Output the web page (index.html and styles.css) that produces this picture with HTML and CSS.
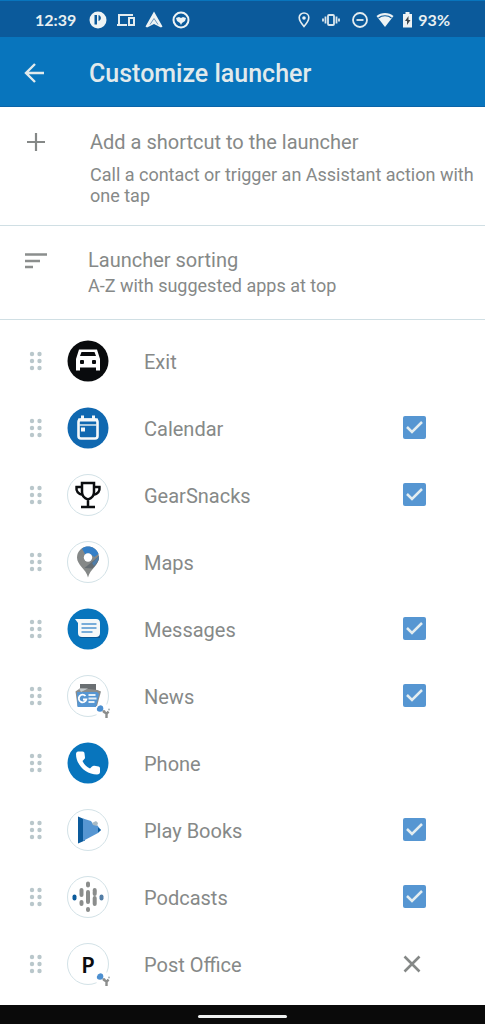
FILE: index.html
```html
<!DOCTYPE html>
<html lang="en">
<head>
<meta charset="utf-8">
<meta name="viewport" content="width=device-width, initial-scale=1">
<title>Customize launcher</title>
<link rel="stylesheet" href="styles.css">
</head>
<body>
<svg class="defs" width="0" height="0" aria-hidden="true">
  <symbol id="grip" viewBox="0 0 14 20">
    <g fill="#b9c7cb"><circle cx="3" cy="3" r="2.200"/><circle cx="10.500" cy="3" r="2.200"/><circle cx="3" cy="10" r="2.200"/><circle cx="10.500" cy="10" r="2.200"/><circle cx="3" cy="17" r="2.200"/><circle cx="10.500" cy="17" r="2.200"/></g>
  </symbol>
  <symbol id="assistant" viewBox="0 0 16 16">
    <circle cx="4" cy="4.500" r="3.300" fill="#4c8fd0"/><circle cx="8" cy="7.500" r="1.500" fill="#8b8d8c"/><circle cx="13" cy="5.500" r="1" fill="#aab4b7"/><path d="M8 8l2.500 1.500M12.500 7.500L10.500 10v4" fill="none" stroke="#8b8d8c" stroke-width="2.400"/>
  </symbol>
</svg>
<div class="screen">
  <div class="status">
    <span class="status-text">12:39</span>
    <div class="status-left">
      <svg width="18" height="18" viewBox="0 0 18 18"><circle cx="9" cy="9" r="8.500" fill="#eef3f4"/><path d="M5.500 4H8v9.500H5.500z" fill="#0b5a9b"/><path d="M10 4.500a3 3 0 0 1 0 5z" fill="#0b5a9b" stroke="#0b5a9b"/></svg>
      <svg width="20" height="18" viewBox="0 0 20 18" fill="none" stroke="#e4ecef" stroke-width="2"><path d="M3 13V4h14M1 14h10"/><rect x="13" y="7" width="5" height="7"/></svg>
      <svg width="18" height="18" viewBox="0 0 18 18" fill="#eef3f4"><path d="M9 0.500L17.500 15.500l-1.500 1L9 13l-7 3.500-1.500-1z"/><path d="M5 13.500L9 7.500l4 6" fill="none" stroke="#6c98bd"/></svg>
      <svg width="18" height="18" viewBox="0 0 18 18"><circle cx="9" cy="9" r="7.500" fill="none" stroke="#eef3f4" stroke-width="2"/><path d="M4 7l3-1 2 1 2-1 3 1-1 3-3 2-1 2-1-2-3-2z" fill="#eef3f4"/></svg>
    </div>
    <div class="status-right">
      <svg width="12" height="18" viewBox="0 0 12 18"><path d="M6 2C3.200 2 1.200 4 1.200 6.500 1.200 10 6 15.500 6 15.500s4.800-5.500 4.800-9C10.800 4 8.800 2 6 2z" fill="none" stroke="#e4ecef" stroke-width="1.600"/><circle cx="6" cy="7" r="1.800" fill="#eef3f4"/></svg>
      <svg width="18" height="18" viewBox="0 0 18 18" fill="none" stroke="#dbe7ee" stroke-width="1.800"><rect x="6" y="4" width="6" height="10" rx="1"/><path d="M3.500 5.500v7M1 7.500v3M14.500 5.500v7M17 7.500v3"/></svg>
      <svg width="16" height="18" viewBox="0 0 16 18" fill="none" stroke="#e4ecef" stroke-width="1.800"><circle cx="8" cy="9" r="7"/><path d="M4.500 9h7"/></svg>
      <svg class="tight" width="18" height="18" viewBox="0 0 18 18"><path d="M0.500 5C5 1 13 1 17.500 5L9 16z" fill="#eef3f4"/><path d="M2.500 7C6 4 12 4 15.500 7" fill="none" stroke="#0b5a9b" stroke-width="1.200"/></svg>
      <svg class="tight" width="11" height="18" viewBox="0 0 11 18"><path d="M3.500 1h4v2H10v13.500H1V3h2.500z" fill="#eef3f4"/><path d="M6.500 5L3 10h2v4l3.500-5h-2z" fill="#41494d"/></svg>
    </div>
    <span class="status-text">93%</span>
  </div>
  <header class="appbar">
    <button class="plain back" type="button" aria-label="Back"><svg width="22" height="22" viewBox="0 0 22 22" fill="none" stroke="#e1eaec" stroke-width="2.400"><path d="M20 10H3M11 1l-9 9 9 9"/></svg></button>
    <h1>Customize launcher</h1>
  </header>
  <main>
    <button class="plain option option-add" type="button">
      <svg width="22" height="22" viewBox="0 0 22 22"><path d="M2 12h18M11 3v18" stroke="#858887" stroke-width="2.200"/></svg>
      <span class="option-body"><span class="option-title">Add a shortcut to the launcher</span><span class="option-note">Call a contact or trigger an Assistant action with one tap</span></span>
    </button>
    <button class="plain option option-sort" type="button">
      <svg width="24" height="22" viewBox="0 0 24 22"><path d="M1 6.500h22M1 13h15M1 19h8" stroke="#8b8e8d" stroke-width="2.600"/></svg>
      <span class="option-body"><span class="option-title">Launcher sorting</span><span class="option-note">A-Z with suggested apps at top</span></span>
    </button>
    <ul class="apps">
      <li class="app">
        <svg class="grip"><use href="#grip"/></svg>
        <svg class="icon" viewBox="0 0 44 44"><circle cx="22" cy="22" r="20.500" fill="#090b0d"/><path d="M13 10.500h18l3 9.500V31.500h-4v-3H14v3h-4V20z" fill="#fff"/><path d="M15.500 13h13l1.500 4H14z" fill="#090b0d"/><rect x="14" y="21" width="4" height="4" rx="1" fill="#090b0d"/><rect x="26" y="21" width="4" height="4" rx="1" fill="#090b0d"/></svg>
        <span class="name">Exit</span>
      </li>
      <li class="app">
        <svg class="grip"><use href="#grip"/></svg>
        <svg class="icon" viewBox="0 0 44 44"><circle cx="22" cy="22" r="20.500" fill="#1068b0"/><rect x="12.500" y="13.500" width="19" height="19" rx="2.500" fill="none" stroke="#f5f8f9" stroke-width="2.600"/><path d="M12 12.500h20v3H12zM15 9.500h3v5h-3zM26 9.500h3v5h-3z" fill="#f5f8f9"/><path d="M13 19h18" stroke="#dbe8ee" stroke-width="1.500"/><path d="M15 21.500h4v4h-4z" fill="#f5f8f9"/></svg>
        <label class="name" for="calendar">Calendar</label><input class="check" type="checkbox" id="calendar" checked>
      </li>
      <li class="app">
        <svg class="grip"><use href="#grip"/></svg>
        <svg class="icon" viewBox="0 0 44 44"><circle class="ring" cx="22" cy="22" r="20.500"/><path d="M16 10h12v9c0 4-3 6.500-6 7.500-3-1-6-3.500-6-7.500zM16 14h-5.500c-.5 4 1.500 7 6.500 8M28 14h5.500c.5 4-1.500 7-6.500 8M22 26v7.500M15 34h14" fill="none" stroke="#0b0d0f" stroke-width="2.500"/></svg>
        <label class="name" for="gear">GearSnacks</label><input class="check" type="checkbox" id="gear" checked>
      </li>
      <li class="app">
        <svg class="grip"><use href="#grip"/></svg>
        <svg class="icon" viewBox="0 0 44 44"><circle class="ring" cx="22" cy="22" r="20.500"/><path d="M22 6.500A11 11 0 0 0 11 17.500C11 25 20 29 22 37.500 24 29 33 25 33 17.500A11 11 0 0 0 22 6.500z" fill="#858887"/><path d="M16 8.500c5-4 14-2 16.500 5.500l-4 3-6-4-3 2z" fill="#347fc7"/><path d="M18.500 28L33 16c.3 6-4 9.500-6.500 12.500z" fill="#656d72"/><path d="M26 23l7-7c.3 4-2.500 7.500-5 10z" fill="#4f7da8"/><circle cx="22" cy="17.500" r="4.200" fill="#fff"/></svg>
        <span class="name">Maps</span>
      </li>
      <li class="app">
        <svg class="grip"><use href="#grip"/></svg>
        <svg class="icon" viewBox="0 0 44 44"><circle cx="22" cy="22" r="20.500" fill="#0875bd"/><path d="M14 31h20v-4l-20 2z" fill="#0a5894"/><path d="M9 12h21a4 4 0 0 1 4 4v10a4 4 0 0 1-4 4H16a4 4 0 0 1-4-4V16z" fill="#f5f8f8"/><path d="M15.500 17h15M15.500 21h15M15.500 25h11" stroke="#5094ce" stroke-width="1.600"/></svg>
        <label class="name" for="messages">Messages</label><input class="check" type="checkbox" id="messages" checked>
      </li>
      <li class="app">
        <svg class="grip"><use href="#grip"/></svg>
        <span class="badged"><svg class="icon" viewBox="0 0 44 44"><circle class="ring" cx="22" cy="22" r="20.500"/><path d="M14 10h16v10H14z" fill="#6a6f72"/><path d="M9.500 17.500l5-3.500 17 2 3.500 1.500-4 14.500H11.500z" fill="#8b8d8c"/><path d="M13 14.500h9l-7 3.500z" fill="#c5cccf"/><path d="M11 18h20l2 2-3 13H11.500z" fill="#5696d2"/><path d="M19.500 22a3.800 3.800 0 1 0 .8 3.500H17" fill="none" stroke="#fff" stroke-width="1.800"/><path d="M22.500 21h7M22.500 24.500h8M22.500 28h6" stroke="#e5eff6" stroke-width="1.800"/></svg><svg class="badge"><use href="#assistant"/></svg></span>
        <label class="name" for="news">News</label><input class="check" type="checkbox" id="news" checked>
      </li>
      <li class="app">
        <svg class="grip"><use href="#grip"/></svg>
        <svg class="icon" viewBox="0 0 44 44"><circle cx="22" cy="22" r="20.500" fill="#0875bd"/><path d="M10 13c0-2 1.500-2.500 3-2.500h3.500c1.500 0 2 1 2 2l.5 4c0 1-.5 1.500-1.500 2.500l-1 1c1.500 3.500 4 5.500 7.500 7.500l2-2c1-.8 1.500-1 2.500-.8l4 .8c1 .2 1.500 1 1.500 2v3.500c0 1.500-1 2.500-3 2.500C20 33.500 10 24 10 13z" fill="#fff"/></svg>
        <span class="name">Phone</span>
      </li>
      <li class="app">
        <svg class="grip"><use href="#grip"/></svg>
        <svg class="icon" viewBox="0 0 44 44"><circle class="ring" cx="22" cy="22" r="20.500"/><path d="M12 8.500l7 3v21l-7 3z" fill="#0b5a9b"/><path d="M17 10.500l8 2.500 2 3 4 1 4 5-3 3-15 8z" fill="#5696d2"/><path d="M26 15l4-2 2 2-1 3-4-1z" fill="#a8bac4"/><path d="M32 19.500l3 2.500-3 2.500z" fill="#0b5a9b"/></svg>
        <label class="name" for="books">Play Books</label><input class="check" type="checkbox" id="books" checked>
      </li>
      <li class="app">
        <svg class="grip"><use href="#grip"/></svg>
        <svg class="icon" viewBox="0 0 44 44"><circle class="ring" cx="22" cy="22" r="20.500"/><g fill="none" stroke="#8b8d8c" stroke-width="4" stroke-linecap="round"><path d="M15.500 15v5M15.500 27v2M22 8.500v2M22 17v10M22 34v1M28.700 15v1M28.700 23v6"/><path d="M8.500 21.500v2" stroke="#0b5a9b"/><path d="M35.500 21.500v2" stroke="#527da5"/><path d="M28.700 17v2"/></g></svg>
        <label class="name" for="podcasts">Podcasts</label><input class="check" type="checkbox" id="podcasts" checked>
      </li>
      <li class="app">
        <svg class="grip"><use href="#grip"/></svg>
        <span class="badged"><span class="letter">P</span><svg class="badge"><use href="#assistant"/></svg></span>
        <span class="name">Post Office</span>
        <button class="plain remove" type="button" aria-label="Remove Post Office"><svg width="22" height="22" viewBox="0 0 22 22"><path d="M2.500 3.500l15 15M17.500 3.500l-15 15" stroke="#858887" stroke-width="2.600"/></svg></button>
      </li>
    </ul>
  </main>
  <footer class="navbar"><span class="home"></span></footer>
</div>
</body>
</html>
```
FILE: styles.css
```css
* { box-sizing: border-box; }
body {
  margin: 0;
  font-family: Roboto, "Liberation Sans", sans-serif;
  color: #868988;
  background: #fff;
}
.defs { position: absolute; }
svg { display: block; flex: none; }
.screen { display: flex; flex-direction: column; min-height: 100vh; }
main { flex: 1; }
.plain {
  border: 0;
  padding: 0;
  background: none;
  color: inherit;
  font: inherit;
  text-align: left;
}
.status {
  display: flex;
  align-items: center;
  height: 37px;
  padding: 2px 35px 0;
  background: #0b5a9b;
  border-top: 1px solid #0875bd;
  color: #e8eff1;
}
.status-text { font: 700 16px/20px Lato, sans-serif; }
.status-left { display: flex; gap: 9px; margin-left: 13px; }
.status-right { display: flex; gap: 12px; margin-left: auto; margin-right: 5px; }
.tight { margin-left: -4px; }
.appbar {
  display: flex;
  align-items: center;
  height: 70px;
  padding: 4px 24px 0;
  background: #0875bd;
  border-bottom: 1px solid #0b64a8;
  color: #e1eaec;
}
.back { width: 65px; }
h1 { margin: 0; font-size: 25px; line-height: 32px; font-weight: 500; }
.option {
  display: flex;
  align-items: flex-start;
  width: 100%;
  border-bottom: 1px solid #d0dfe4;
}
.option > svg { width: 24px; }
.option-body { display: flex; flex-direction: column; flex: 1; margin-left: 42px; }
.option-title { font-size: 20px; line-height: 24px; }
.option-note { font-size: 18px; line-height: 21px; }
.option-add { padding: 23px 8px 19px 24px; }
.option-add .option-note { margin-top: 10px; }
.option-sort { padding: 22px 8px 23px 24px; }
.option-sort .option-body { margin-left: 40px; }
.option-sort .option-note { margin-top: 3px; }
.apps { margin: 0; padding: 7px 0 4px; list-style: none; }
.app {
  display: flex;
  align-items: center;
  height: 67px;
  padding: 0 59px 0 29px;
}
.grip { width: 14px; height: 20px; }
.icon { width: 44px; height: 44px; }
.grip + * { margin-left: 23px; }
.ring { fill: #fff; stroke: #d3e2e7; }
.badged { position: relative; }
.badge { position: absolute; right: -2px; bottom: -2px; width: 16px; height: 16px; background: #fff; border-radius: 8px; }
.letter {
  display: flex;
  align-items: center;
  justify-content: center;
  width: 42px;
  height: 42px;
  margin: 1px;
  border: 1px solid #d3e2e7;
  border-radius: 50%;
  color: #0b0d0f;
  font: 600 22px/24px "Noto Sans", sans-serif;
}
.name { flex: 1; margin-left: 34px; font-size: 20px; line-height: 24px; padding-top: 3px; }
.check {
  appearance: none;
  width: 23px;
  height: 23px;
  margin: 0;
  border-radius: 2px;
  background: #5696d2 url("data:image/svg+xml,%3Csvg xmlns='http://www.w3.org/2000/svg' viewBox='0 0 23 23'%3E%3Cpath d='M4 11l5 5L19 6' fill='none' stroke='%23e3edf0' stroke-width='2.500'/%3E%3C/svg%3E") center / 100%;
}
.check:not(:checked) { background: none; border: 2px solid #868988; }
.remove { width: 24px; }
.navbar {
  display: flex;
  justify-content: center;
  align-items: center;
  height: 19px;
  background: #0a0a0a;
}
.home { width: 89px; height: 3px; margin-top: 3px; border-radius: 2px; background: #eef0f0; }
```
